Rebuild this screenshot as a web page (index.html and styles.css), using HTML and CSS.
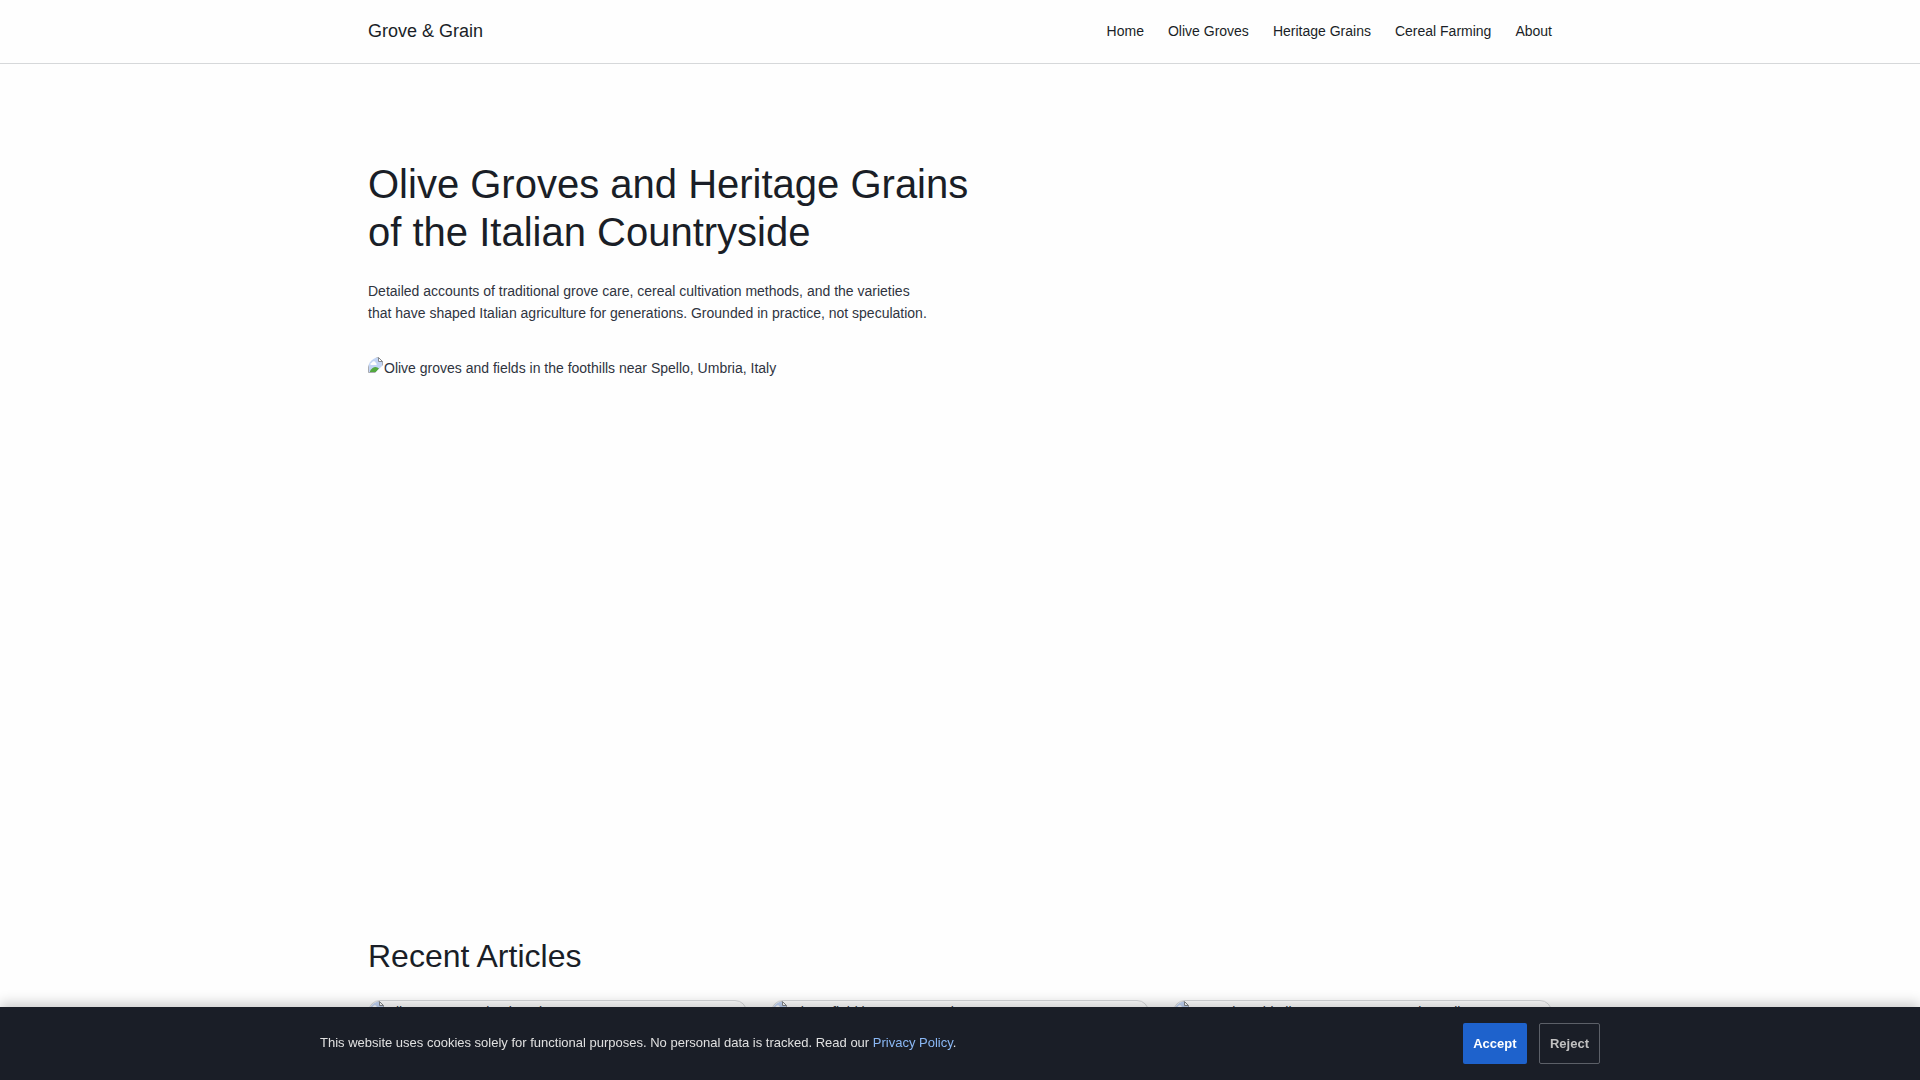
FILE: index.html
```
<!DOCTYPE html>
<html lang="en">

<head>
    <meta charset="UTF-8">
    <meta name="viewport" content="width=device-width, initial-scale=1.0">
    <title>Grove &amp; Grain</title>
    <link rel="stylesheet" href="styles.css">
</head>

<body>

    <!-- Placeholder icon, shared by all pictures -->
    <svg class="defs" width="0" height="0">
        <symbol id="no-image" viewBox="0 0 16 16">
            <path d="M.5.500H10.500L14.500 4.500V15.500H.5Z" fill="#c3d5f5" stroke="#a8abb0"/>
            <path d="M2.500 8a2 2 0 0 1 1.500-2.500a2 2 0 0 1 3.800.5a1.500 1.500 0 0 1 .7 2Z" fill="#fff"/>
            <path d="M2 15V14Q4.500 10 7.500 10Q9.500 10 11 11.500L8 15Z" fill="#53a93f"/>
            <path d="M16 7L7 16H16Z" fill="#fff"/>
            <path d="M10.500.500V4.500H14.500Z" fill="#fff" stroke="#85888c"/>
        </symbol>
    </svg>

    <!-- Header -->
    <header class="site-header">
        <div class="header-inner">
            <a class="logo" href="#">Grove &amp; Grain</a>
            <nav class="site-nav">
                <a href="#">Home</a>
                <a href="#">Olive Groves</a>
                <a href="#">Heritage Grains</a>
                <a href="#">Cereal Farming</a>
                <a href="#">About</a>
            </nav>
        </div>
    </header>

    <main class="container">
        <!-- Hero -->
        <section class="hero">
            <h1>Olive Groves and Heritage Grains of the Italian Countryside</h1>
            <p>Detailed accounts of traditional grove care, cereal cultivation methods, and the varieties that have shaped Italian agriculture for generations. Grounded in practice, not speculation.</p>
            <div class="picture hero-picture"><svg class="pic-icon"><use href="#no-image"/></svg>Olive groves and fields in the foothills near Spello, Umbria, Italy</div>
        </section>

        <!-- Articles -->
        <section class="articles">
            <h2>Recent Articles</h2>
            <div class="card-grid">
                <article class="card">
                    <div class="picture card-picture"><svg class="pic-icon"><use href="#no-image"/></svg>Olive trees growing in Italy</div>
                </article>
                <article class="card">
                    <div class="picture card-picture"><svg class="pic-icon"><use href="#no-image"/></svg>Wheat field in Tuscany, Italy</div>
                </article>
                <article class="card">
                    <div class="picture card-picture"><svg class="pic-icon"><use href="#no-image"/></svg>Centuries-old olive grove near Ostuni, Puglia</div>
                </article>
            </div>
        </section>
    </main>

    <!-- Cookie Banner -->
    <div class="cookie-banner">
        <div class="cookie-inner">
            <p>This website uses cookies solely for functional purposes. No personal data is tracked. Read our <a href="#">Privacy Policy</a>.</p>
            <div class="cookie-actions">
                <button class="btn btn-accept">Accept</button>
                <button class="btn btn-reject">Reject</button>
            </div>
        </div>
    </div>

</body>
</html>
```
FILE: styles.css
```
/* General Styles */
* {
    box-sizing: border-box;
    margin: 0;
    padding: 0;
}

body {
    font-family: "Liberation Sans", Arial, sans-serif;
    font-size: 14px;
    line-height: 22.4px;
    color: #2f343f;
    background-color: #fefefe;
    height: 100vh;
    overflow: hidden;
}

a {
    color: inherit;
    text-decoration: none;
}

h1, h2 {
    font-weight: 400;
    color: #1a1e27;
}

.defs {
    position: absolute;
}

/* Header */
.site-header {
    height: 64px;
    border-bottom: 1px solid #d6d8da;
}

.header-inner {
    display: flex;
    align-items: center;
    justify-content: space-between;
    max-width: 1184px;
    height: 62px;
    margin: 0 auto;
    color: #1a1e27;
}

.logo {
    font-size: 18px;
}

.site-nav {
    display: flex;
    gap: 24px;
}

.container {
    max-width: 1184px;
    margin: 0 auto;
}

/* Hero */
.hero {
    padding: 96px 0 64px;
}

.hero h1 {
    max-width: 640px;
    margin-bottom: 24px;
    font-size: 40px;
    line-height: 48px;
}

.hero p {
    max-width: 560px;
    margin-bottom: 32px;
}

/* Pictures */
.picture {
    overflow: hidden;
    border-radius: 12px;
}

.pic-icon {
    width: 16px;
    height: 16px;
    vertical-align: baseline;
}

.hero-picture {
    height: 515px;
}

.card-picture {
    height: 200px;
}

/* Articles */
.articles h2 {
    margin-bottom: 24px;
    font-size: 32px;
    line-height: 40px;
}

.card-grid {
    display: grid;
    grid-template-columns: repeat(3, 1fr);
    gap: 24px;
}

.card {
    overflow: hidden;
    border: 1px solid #d6d8da;
    border-radius: 12px;
}

/* Cookie Banner */
.cookie-banner {
    position: fixed;
    right: 0;
    bottom: 0;
    left: 0;
    padding: 16px 0;
    background-color: #1a1e27;
    color: #e0e0e0;
    box-shadow: 0 -4px 12px rgba(0, 0, 0, 0.2);
}

.cookie-inner {
    display: flex;
    align-items: center;
    justify-content: space-between;
    max-width: 1280px;
    margin: 0 auto;
    font-size: 13px;
}

.cookie-inner a {
    color: #8ab8f5;
}

.cookie-actions {
    display: flex;
    gap: 12px;
}

.btn {
    height: 41px;
    padding: 0 10px;
    border: none;
    border-radius: 2px;
    font-family: inherit;
    font-size: 13px;
    font-weight: 700;
}

.btn-accept {
    padding: 0 10.4px;
    background-color: #1e62cc;
    color: #fff;
}

.btn-reject {
    border: 1px solid #5c6068;
    background-color: transparent;
    color: #c0c0c0;
}
```
